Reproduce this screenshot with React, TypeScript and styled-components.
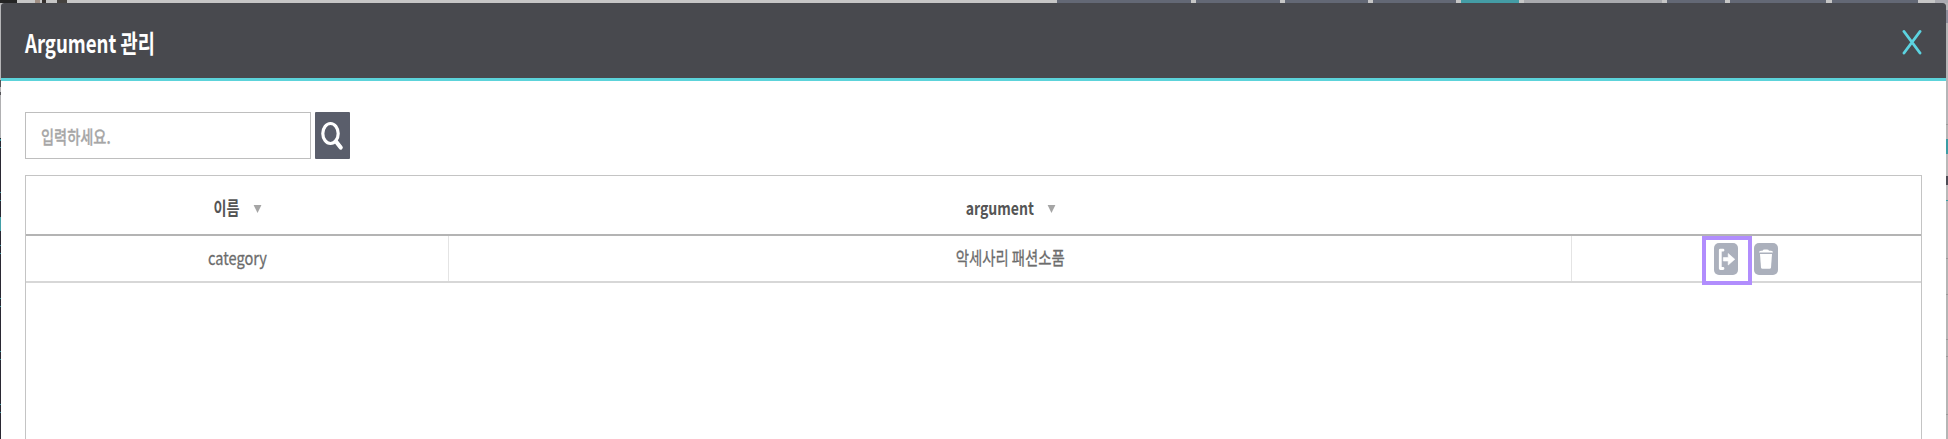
import React from "react";
import styled, { createGlobalStyle } from "styled-components";

const GlobalStyle = createGlobalStyle`
  * { box-sizing: border-box; }
  html, body { margin: 0; overflow: hidden; }
  body { font-family: "Noto Sans CJK KR", "Noto Sans", sans-serif; background: #fff; }
`;

const Page = styled.div`
  width: 1948px;
  height: 439px;
  display: flex;
  flex-direction: column;
  overflow: hidden;
  background: #b9b9bb;
`;

const TabStrip = styled.div`
  display: flex;
  flex: none;
  height: 3px;
  background: #c6c6c6;
`;

const TabEdge = styled.span<{ $width: number; $color: string }>`
  flex: none;
  width: ${(p) => p.$width}px;
  background: ${(p) => p.$color};
`;

const Middle = styled.div`
  display: flex;
  flex: 1;
  min-height: 0;
`;

const LeftEdge = styled.div`
  flex: none;
  width: 1px;
  background: linear-gradient(
    #b5b5b7 0 77px, #56565a 77px 84px, #b5b5b7 84px 89px, #56565a 89px 92px,
    #b0b0b2 92px 135px, #2a2833 135px 136px, #37929b 136px 138px, #2a2833 138px 144px,
    #37929b 144px 145px, #2a2833 145px 189px, #37929b 189px 190px, #2a2833 190px 197px,
    #37929b 197px 198px, #2a2833 198px 214px, #429fa7 214px 228px, #2a2833 228px 242px,
    #37929b 242px 243px, #2a2833 243px 250px, #37929b 250px 251px, #2a2833 251px 295px,
    #37929b 295px 296px, #2a2833 296px 303px, #37929b 303px 304px, #2a2833 304px 348px,
    #37929b 348px 349px, #2a2833 349px 356px, #37929b 356px 357px, #2a2833 357px 401px,
    #37929b 401px 402px, #2a2833 402px 409px, #37929b 409px 410px, #2a2833 410px
  );
`;

const RightEdge = styled.div`
  flex: none;
  width: 2px;
  background: linear-gradient(
    #b5b5b7 0 7px, #8d8d9b 7px 20px, #b5b5b7 20px 121px, #9b9b9b 121px 122px,
    #b5b5b5 122px 136px, #3c9ca4 136px 151px, #b9b9b9 151px 173px, #4c4c55 173px 182px,
    #b9b9b9 182px 197px, #3c9ca4 197px 198px, #b5b5b5 198px 255px, #999 255px 256px,
    #b5b5b5 256px 291px, #999 291px 292px, #b5b5b5 292px 336px, #999 336px 337px,
    #b5b5b5 337px 353px, #999 353px 354px, #b5b5b5 354px 411px, #999 411px 412px, #b5b5b5 412px
  );
`;

const Modal = styled.section`
  flex: 1;
  min-width: 0;
  display: flex;
  flex-direction: column;
  border-radius: 3px 3px 0 0;
  overflow: hidden;
  background: #fff;
`;

const Header = styled.header`
  flex: none;
  height: 78px;
  padding: 0 24px;
  display: flex;
  align-items: center;
  justify-content: space-between;
  background: #48494e;
  border-bottom: 3px solid #5cd3da;
`;

const Condensed = styled.span<{ $ratio: number; $origin?: string }>`
  display: inline-block;
  white-space: nowrap;
  transform: scaleX(${(p) => p.$ratio});
  transform-origin: ${(p) => p.$origin ?? "center"};
`;

const Title = styled.h1`
  margin: 0;
  padding-top: 3px;
  font-size: 25px;
  line-height: 36px;
  font-weight: 700;
  color: #fff;
`;

const CloseButton = styled.button`
  width: 20px;
  height: 26px;
  margin: 3px 0 0 0;
  padding: 0;
  border: 0;
  background: none;
  svg { display: block; }
`;

const Body = styled.div`
  flex: 1;
  min-height: 0;
  padding: 31px 24px 0 24px;
  display: flex;
  flex-direction: column;
  gap: 16px;
`;

const SearchBar = styled.div`
  flex: none;
  display: flex;
  gap: 4px;
  height: 47px;
`;

const SearchField = styled.div`
  width: 286px;
  padding: 0 15px 0 15px;
  border: 1px solid #bebebe;
  font-size: 18px;
  line-height: 46px;
  font-weight: 500;
  color: #a6a6a6;
  -webkit-text-stroke: 0.3px;
`;

const SearchButton = styled.button`
  width: 35px;
  padding: 0;
  border: 0;
  border-radius: 1px;
  background: #5a5e6b;
  svg { display: block; }
`;

const Table = styled.div`
  flex: 1;
  border: 1px solid #c4c4c4;
  border-bottom: 0;
`;

const Row = styled.div<{ $head?: boolean }>`
  display: grid;
  grid-template-columns: 423px 1123px 1fr;
  grid-template-rows: 100%;
  height: ${(p) => (p.$head ? "60px" : "47px")};
  border-bottom: 2px solid ${(p) => (p.$head ? "#b4b4b4" : "#d7d7d7")};
  color: ${(p) => (p.$head ? "#555" : "#6c6c6c")};
  font-weight: ${(p) => (p.$head ? 700 : 400)};
  -webkit-text-stroke: ${(p) => (p.$head ? "0" : "0.3px")};
`;

const Cell = styled.div<{ $top?: number; $divided?: boolean }>`
  display: flex;
  align-items: center;
  justify-content: center;
  padding-top: ${(p) => p.$top ?? 0}px;
  padding-bottom: ${(p) => (p.$divided ? 3 : 0)}px;
  border-right: ${(p) => (p.$divided ? "1px solid #e4e4e4" : "0")};
  font-size: 18px;
  line-height: 26px;
`;

const HeadLabel = styled(Condensed)`
  display: flex;
  align-items: center;
  gap: 18px;
`;

const SortArrow = styled.i`
  flex: none;
  margin-top: 4px;
  border: solid transparent;
  border-width: 8px 5px 0;
  border-top-color: #a5a5a5;
`;

const Actions = styled.div`
  display: flex;
  align-items: flex-start;
  padding-left: 130px;
  gap: 2px;
`;

const Highlight = styled.span`
  flex: none;
  position: relative;
  z-index: 1;
  width: 50px;
  height: 49px;
  padding: 3px 0 0 8px;
  border: 4px solid #b18dfd;
`;

const ActionButton = styled.button`
  display: block;
  width: 24px;
  height: 32px;
  padding: 0;
  border: 0;
  border-radius: 5px;
  background: #abb0bc;
  svg { display: block; }
`;

const DeleteButton = styled(ActionButton)`
  margin-top: 7px;
`;

const TABS: [number, string][] = [
  [17, "#242424"], [18, "#c6c6c6"], [5, "#a08f84"], [2, "#c6c6c6"], [4, "#35302e"], [11, "#c6c6c6"],
  [10, "#45423f"], [990, "#c6c6c6"],
  [134, "#636875"], [5, "#c6c6c6"], [84, "#636875"], [5, "#c6c6c6"], [83, "#636875"], [5, "#c6c6c6"],
  [83, "#636875"], [5, "#c6c6c6"], [58, "#449ca5"], [5, "#c6c6c6"], [138, "#a9aaae"], [5, "#c6c6c6"],
  [58, "#636875"], [5, "#c6c6c6"], [96, "#636875"], [6, "#c6c6c6"], [86, "#636875"], [17, "#c6c6c6"],
  [13, "#aaaab0"],
];

export default function App() {
  return (
    <>
      <GlobalStyle />
      <Page>
        <TabStrip>
          {TABS.map(([width, color], i) => (
            <TabEdge key={i} $width={width} $color={color} />
          ))}
        </TabStrip>
        <Middle>
          <LeftEdge />
          <Modal>
            <Header>
              <Title>
                <Condensed $ratio={0.745} $origin="left">Argument 관리</Condensed>
              </Title>
              <CloseButton aria-label="close">
                <svg width="20" height="26" viewBox="0 0 20 26" fill="none" stroke="#5cd3e0" strokeWidth="2.9" strokeLinecap="round">
                  <path d="M2 2.5 18 24M18 2.5 2 24" />
                </svg>
              </CloseButton>
            </Header>
            <Body>
              <SearchBar>
                <SearchField>
                  <Condensed $ratio={0.79} $origin="left">입력하세요.</Condensed>
                </SearchField>
                <SearchButton aria-label="search">
                  <svg width="35" height="47" viewBox="0 0 35 47" fill="none" stroke="#fff">
                    <ellipse cx="15.5" cy="21.5" rx="7.7" ry="10" strokeWidth="3.2" />
                    <path d="M21 29.5 25.7 35.5" strokeWidth="4.2" strokeLinecap="round" />
                  </svg>
                </SearchButton>
              </SearchBar>
              <Table>
                <Row $head>
                  <Cell $top={4}>
                    <HeadLabel $ratio={0.785}>
                      이름
                      <SortArrow />
                    </HeadLabel>
                  </Cell>
                  <Cell $top={4}>
                    <HeadLabel $ratio={0.78}>
                      argument
                      <SortArrow />
                    </HeadLabel>
                  </Cell>
                  <Cell />
                </Row>
                <Row>
                  <Cell $divided>
                    <Condensed $ratio={0.81}>category</Condensed>
                  </Cell>
                  <Cell $divided>
                    <Condensed $ratio={0.8}>악세사리 패션소품</Condensed>
                  </Cell>
                  <Actions>
                    <Highlight>
                      <ActionButton aria-label="export">
                        <svg width="24" height="32" viewBox="0 0 24 32">
                          <path d="M9 7.2H6.3V25.5H9" fill="none" stroke="#fff" strokeWidth="2.8" strokeLinecap="round" strokeLinejoin="round" />
                          <path d="M9.3 14.6H14.2V10.5L20.8 16.3 14.2 22V18H9.3Z" fill="#fff" stroke="#fff" strokeWidth=".6" strokeLinejoin="round" />
                        </svg>
                      </ActionButton>
                    </Highlight>
                    <DeleteButton aria-label="delete">
                      <svg width="24" height="32" viewBox="0 0 24 32" fill="#fff">
                        <path d="M5 9.5Q5 7.8 7 7.8H8.5Q9 6.5 10.5 6.5H13Q14.5 6.5 15 7.8H17Q19 7.8 19 9.5Z" />
                        <path d="M6 11H18L17 24.5Q16.8 25.8 15.6 25.8H8.4Q7.2 25.8 7 24.5Z" />
                      </svg>
                    </DeleteButton>
                  </Actions>
                </Row>
              </Table>
            </Body>
          </Modal>
          <RightEdge />
        </Middle>
      </Page>
    </>
  );
}
